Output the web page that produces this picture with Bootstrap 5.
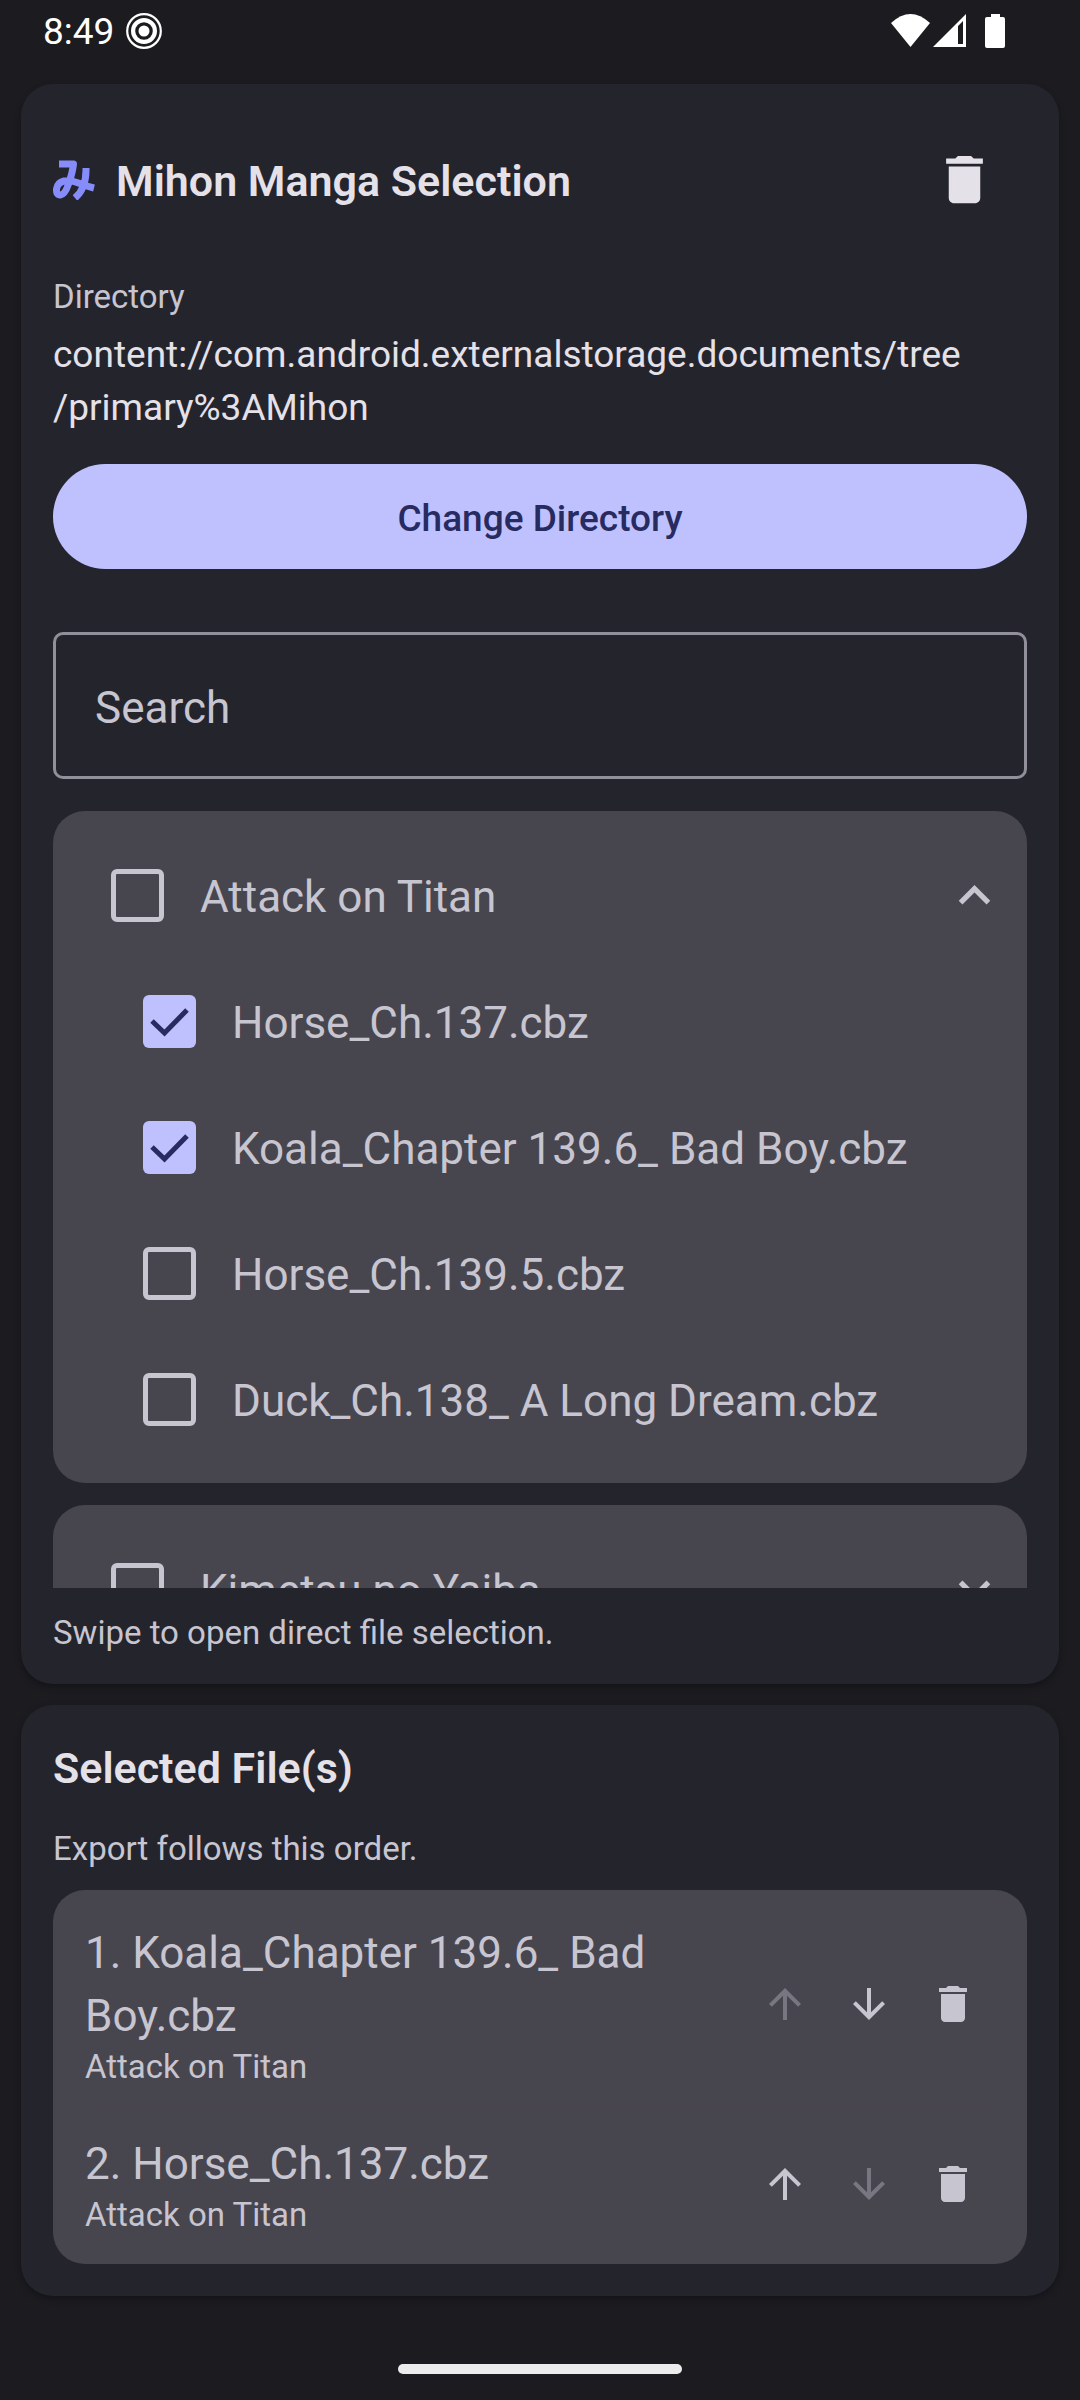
<!DOCTYPE html>
<html lang="en" data-bs-theme="dark">
<head>
<meta charset="utf-8">
<meta name="viewport" content="width=device-width, initial-scale=1">
<title>Mihon Manga Selection</title>
<link href="https://cdn.jsdelivr.net/npm/bootstrap@5.3.0/dist/css/bootstrap.min.css" rel="stylesheet">
<style>
:root{
  --page:#1c1b20; --panel:#24242d; --tile:#47464f; --on:#e5e1e9; --soft:#c7c5d0;
  --accent:#bfc1ff; --on-accent:#272b60; --line:#918f9a;
}
body{background:var(--page);color:var(--on);font-family:Roboto,"Noto Sans CJK JP",sans-serif;font-size:37px;line-height:53px}
.status{height:84px;padding:0 74px 22px 43px;color:#fff;font-size:37px;line-height:1}
.status svg{display:block}
.status-left{gap:12px}
.screen{padding:0 21px}
.panel{background:var(--panel);border:0;border-radius:32px;padding:32px;box-shadow:0 3px 6px rgba(0,0,0,.3);color:var(--on)}
.stack{gap:21px}
.heading{font-size:43px;line-height:63px;font-weight:600;margin:0;color:var(--on)}
.note{font-size:33px;line-height:38px;padding-top:4px;color:var(--soft);margin:0}
.note-top{margin-top:32px}
.note-end{margin-top:22px}
.note-mid{margin:26px 0 22px}
.logo{width:42px;height:42px;flex:none}
.tool{width:84px;height:84px;padding:0;border:0;flex:none;display:flex;align-items:center;justify-content:center;color:var(--soft)}
.tool:disabled{color:var(--soft);opacity:.38;border:0}
.tool svg{width:48px;height:48px;fill:currentColor}
.tool-lg{width:126px;height:126px;color:var(--on)}
.tool-lg svg{width:63px;height:63px}
.path{margin:12px 0 30px}
.btn-main{background:var(--accent);color:var(--on-accent);font-size:37px;font-weight:500;line-height:53px;padding:28px 0 24px;border:0;border-radius:53px}
.search{height:147px;margin:63px 0 32px;padding:4px 39px 0;border:3px solid var(--line);border-radius:10px;background:transparent;color:var(--soft);font-size:44px}
.search::placeholder{color:var(--soft);opacity:1}
.library{max-height:777px;overflow:hidden;gap:22px}
.tile{background:var(--tile);border-radius:32px;color:var(--soft)}
.group-box{padding:21px;flex:none}
.entry{height:126px;font-size:44px;line-height:63px}
.entry label{padding-top:5px}
.entry .form-check-input{width:53px;height:53px;margin:0 36px 0 37px;flex:none;border:5px solid var(--soft);border-radius:6px;background-color:transparent}
.entry .form-check-input:checked{background-color:var(--accent);border:0;background-size:53px 53px;
  background-image:url("data:image/svg+xml,%3csvg xmlns='http://www.w3.org/2000/svg' viewBox='0 0 53 53'%3e%3cpath d='M9 26l12.500 12L44 15' fill='none' stroke='%23272b60' stroke-width='5'/%3e%3c/svg%3e")}
.child{padding-left:32px}
.chev{width:63px;height:63px;padding:0;border:0;color:var(--soft)}
.chev svg{display:block;width:63px;height:63px;fill:currentColor}
.picked{padding:32px 32px 30px}
.picked-name{font-size:44px;line-height:63px}
.picked-from{font-size:33px;line-height:38px}
.rule{border:0;border-top:3px solid #49454f;opacity:1;margin:22px 0}
.foot{padding-bottom:26px}
.home{width:284px;height:10px;border-radius:5px;background:#ececec}
</style>
</head>
<body class="d-flex flex-column min-vh-100">
<svg class="d-none">
  <symbol id="trash" viewBox="0 0 24 24"><path d="M6 19c0 1.100.9 2 2 2h8c1.100 0 2-.9 2-2V7H6v12zM19 4h-3.500l-1-1h-5l-1 1H5v2h14V4z"/></symbol>
  <symbol id="up" viewBox="0 0 24 24"><path d="M4 12l1.410 1.410L11 7.830V20h2V7.830l5.580 5.590L20 12l-8-8-8 8z"/></symbol>
  <symbol id="down" viewBox="0 0 24 24"><path d="M20 12l-1.410-1.410L13 16.170V4h-2v12.170l-5.580-5.590L4 12l8 8 8-8z"/></symbol>
  <symbol id="less" viewBox="0 0 24 24"><path d="M12 8l-6 6 1.410 1.410L12 10.830l4.590 4.580L18 14z"/></symbol>
  <symbol id="more" viewBox="0 0 24 24"><path d="M16.590 8.590L12 13.170 7.410 8.590 6 10l6 6 6-6z"/></symbol>
</svg>

<header class="status d-flex align-items-center justify-content-between">
  <div class="status-left d-flex align-items-center">
    <span>8:49</span>
    <svg width="36" height="36" viewBox="0 0 36 36"><g fill="none" stroke="#fff"><circle cx="18" cy="18" r="16.800" stroke-width="2.200"/><circle cx="18" cy="18" r="10.900" stroke-width="4.200"/></g><circle cx="18" cy="18" r="5.500" fill="#fff"/></svg>
  </div>
  <svg width="115" height="36" viewBox="0 0 115 36" fill="#fff">
    <path d="M0 10Q19.500-8 39 10L19.500 34z"/>
    <path fill-rule="evenodd" d="M42 34L75 1v33zM67 13v18h5V8z"/>
    <path d="M100 1h9v3h3q2 0 2 2v27q0 2-2 2H96q-2 0-2-2V6q0-2 2-2h4z"/>
  </svg>
</header>

<main class="screen d-flex flex-column stack">
  <section class="card panel">
    <div class="d-flex align-items-center stack">
      <svg class="logo" viewBox="0 0 42 42" fill="none" stroke="#868dfa" stroke-width="7" stroke-linejoin="round"><path d="M6 6H20.500Q19.500 15 15.500 26Q12 36.500 7.500 37Q3 37 3.500 31Q4.500 24.500 11 23Q18 22 27 25.500Q33 28 41 30"/><path d="M33 10Q33.500 30 22 40"/></svg>
      <h1 class="heading flex-grow-1 pt-1">Mihon Manga Selection</h1>
      <button class="btn tool tool-lg" type="button" aria-label="Delete"><svg><use href="#trash"/></svg></button>
    </div>
    <p class="note note-top">Directory</p>
    <p class="path">content://com.android.externalstorage.documents/tree<br>/primary%3AMihon</p>
    <button class="btn btn-main w-100" type="button">Change Directory</button>
    <input class="form-control search" type="search" placeholder="Search" aria-label="Search">
    <div class="library d-flex flex-column">
      <div class="tile group-box">
        <div class="entry d-flex align-items-center">
          <input class="form-check-input" type="checkbox" id="g1"><label class="flex-grow-1" for="g1">Attack on Titan</label>
          <button class="btn chev" type="button" aria-label="Collapse"><svg><use href="#less"/></svg></button>
        </div>
        <div class="entry child d-flex align-items-center"><input class="form-check-input" type="checkbox" id="c1" checked><label for="c1">Horse_Ch.137.cbz</label></div>
        <div class="entry child d-flex align-items-center"><input class="form-check-input" type="checkbox" id="c2" checked><label for="c2">Koala_Chapter 139.6_ Bad Boy.cbz</label></div>
        <div class="entry child d-flex align-items-center"><input class="form-check-input" type="checkbox" id="c3"><label for="c3">Horse_Ch.139.5.cbz</label></div>
        <div class="entry child d-flex align-items-center"><input class="form-check-input" type="checkbox" id="c4"><label for="c4">Duck_Ch.138_ A Long Dream.cbz</label></div>
      </div>
      <div class="tile group-box">
        <div class="entry d-flex align-items-center">
          <input class="form-check-input" type="checkbox" id="g2"><label class="flex-grow-1" for="g2">Kimetsu no Yaiba</label>
          <button class="btn chev" type="button" aria-label="Expand"><svg><use href="#more"/></svg></button>
        </div>
      </div>
    </div>
    <p class="note note-end">Swipe to open direct file selection.</p>
  </section>

  <section class="card panel">
    <h2 class="heading">Selected File(s)</h2>
    <p class="note note-mid">Export follows this order.</p>
    <div class="tile picked">
      <div class="d-flex align-items-center">
        <div class="flex-grow-1">
          <div class="picked-name">1. Koala_Chapter 139.6_ Bad Boy.cbz</div>
          <div class="picked-from">Attack on Titan</div>
        </div>
        <button class="btn tool" type="button" aria-label="Move up" disabled><svg><use href="#up"/></svg></button>
        <button class="btn tool" type="button" aria-label="Move down"><svg><use href="#down"/></svg></button>
        <button class="btn tool" type="button" aria-label="Remove"><svg><use href="#trash"/></svg></button>
      </div>
      <hr class="rule">
      <div class="d-flex align-items-center">
        <div class="flex-grow-1">
          <div class="picked-name">2. Horse_Ch.137.cbz</div>
          <div class="picked-from">Attack on Titan</div>
        </div>
        <button class="btn tool" type="button" aria-label="Move up"><svg><use href="#up"/></svg></button>
        <button class="btn tool" type="button" aria-label="Move down" disabled><svg><use href="#down"/></svg></button>
        <button class="btn tool" type="button" aria-label="Remove"><svg><use href="#trash"/></svg></button>
      </div>
    </div>
  </section>
</main>
<footer class="foot mt-auto d-flex justify-content-center"><div class="home"></div></footer>
<script src="https://cdn.jsdelivr.net/npm/bootstrap@5.3.0/dist/js/bootstrap.bundle.min.js"></script>
</body>
</html>
